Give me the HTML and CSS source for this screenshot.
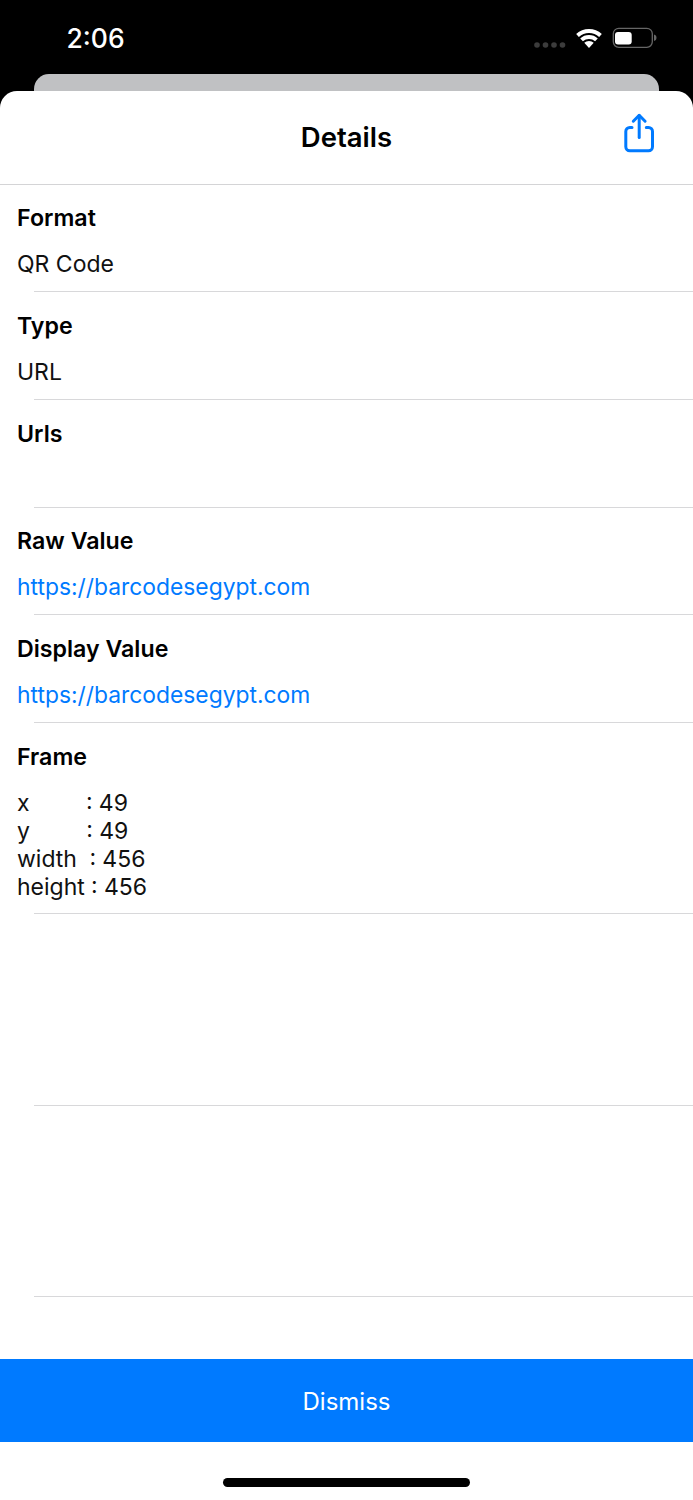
FILE: index.html
```html
<!DOCTYPE html>
<html lang="en">
<head>
<meta charset="utf-8">
<title>Details</title>
<link rel="stylesheet" href="styles.css">
</head>
<body>
<div class="status">
  <span class="time">2:06</span>
  <div class="status-icons">
    <svg class="signal" width="32" height="6" viewBox="0 0 32 6"><g fill="#3c3c3c"><circle cx="3" cy="3" r="2.8"/><circle cx="11.5" cy="3" r="2.8"/><circle cx="20" cy="3" r="2.8"/><circle cx="28.5" cy="3" r="2.8"/></g></svg>
    <svg class="wifi" width="28" height="21" viewBox="0 0 28 21"><path d="M2.520 7.470a17 17 0 0 1 22.960 0" fill="none" stroke="#fff" stroke-width="4"/><path d="M6.570 11.890a11 11 0 0 1 14.860 0" fill="none" stroke="#fff" stroke-width="4"/><path d="M9.270 14.840a7 7 0 0 1 9.460 0L14 20z" fill="#fff"/></svg>
    <svg class="battery" width="45" height="21" viewBox="0 0 45 21"><rect x="1.300" y="1.300" width="39" height="19" rx="5.500" fill="none" stroke="#666" stroke-width="1.300"/><rect x="3" y="5" width="16.700" height="12.400" rx="3" fill="#fff"/><path d="M42 7.500c1.500.4 2.500 1.500 2.500 3.300s-1 2.900-2.500 3.300z" fill="#666"/></svg>
  </div>
</div>
<div class="back-card"></div>
<main class="sheet">
  <header class="nav">
    <h1 class="nav-title">Details</h1>
    <svg class="share" width="31" height="40" viewBox="0 0 31 40" fill="none" stroke="#007aff" stroke-width="3" stroke-linecap="round" stroke-linejoin="round"><path d="M8 14.500H5.800a4 4 0 0 0-4 4v15.300a4 4 0 0 0 4 4h18.700a4 4 0 0 0 4-4V18.500a4 4 0 0 0-4-4h-2.200"/><path d="M15.200 24.500V2.500"/><path d="M9.300 8.200l5.900-5.900 5.900 5.900"/></svg>
  </header>
  <section class="list">
    <div class="row"><div class="label">Format</div><div class="value">QR Code</div></div>
    <div class="row"><div class="label">Type</div><div class="value">URL</div></div>
    <div class="row"><div class="label">Urls</div></div>
    <div class="row"><div class="label">Raw Value</div><div class="value link">https://barcodesegypt.com</div></div>
    <div class="row"><div class="label">Display Value</div><div class="value link">https://barcodesegypt.com</div></div>
    <div class="row tall"><div class="label">Frame</div><div class="value multi">x&nbsp; &nbsp; &nbsp; &nbsp; &nbsp;: 49<br>y&nbsp; &nbsp; &nbsp; &nbsp; &nbsp;: 49<br>width&nbsp; : 456<br>height : 456</div></div>
    <div class="row tall"></div>
    <div class="row tall"></div>
  </section>
  <button class="dismiss" type="button">Dismiss</button>
  <div class="home-area"><div class="home-bar"></div></div>
</main>
</body>
</html>
```
FILE: styles.css
```css
* { box-sizing: border-box; }
html, body { margin: 0; padding: 0; }
body {
  width: 693px;
  height: 1500px;
  overflow: hidden;
  background: #000;
  font-family: Inter, "Liberation Sans", sans-serif;
  color: #000;
}
.status {
  height: 74px;
  display: flex;
  justify-content: space-between;
  align-items: flex-start;
  padding: 0 36px 0 66.500px;
}
.time {
  margin-top: 21px;
  font-size: 26.500px;
  line-height: 34px;
  font-weight: 500;
  color: #fff;
}
.status-icons {
  display: flex;
  align-items: flex-start;
  margin-top: 27px;
}
.signal { margin-top: 15px; margin-right: 9px; }
.wifi { margin-top: 1px; margin-right: 9px; }
.battery { display: block; }
.back-card {
  height: 17px;
  margin: 0 34px;
  background: #c0c1c3;
  border-radius: 15px 15px 0 0;
}
.sheet {
  height: 1409px;
  background: #fff;
  border-radius: 17px 17px 0 0;
  display: flex;
  flex-direction: column;
}
.nav {
  height: 93.500px;
  flex: none;
  display: flex;
  align-items: center;
  justify-content: center;
  border-bottom: 1px solid #d4d4d6;
  position: relative;
}
.nav-title {
  margin: 0;
  font-size: 27.500px;
  font-weight: 600;
  line-height: 34px;
}
.share {
  position: absolute;
  right: 38px;
  top: 22px;
}
.list { flex: none; }
.row {
  height: 107.700px;
  padding: 19.700px 0 0 17px;
  position: relative;
}
.row::after {
  content: "";
  position: absolute;
  left: 34px;
  right: 0;
  bottom: 0;
  height: 1px;
  background: #d8d8da;
}
.row.tall { height: 191.400px; }
.label {
  font-size: 23.200px;
  line-height: 28px;
  font-weight: 600;
}
.value {
  margin-top: 18px;
  font-size: 23px;
  line-height: 28px;
  font-weight: 400;
  color: #111;
}
.value.link { color: #007aff; font-size: 22.850px; }
.value.multi { word-spacing: -0.200px; }
.dismiss {
  flex: none;
  display: block;
  width: 100%;
  height: 83.500px;
  margin-top: 61.800px;
  border: 0;
  padding: 1px 0 0;
  background: #007aff;
  color: #fff;
  font-family: inherit;
  font-size: 24px;
  font-weight: 400;
}
.home-area {
  flex: 1;
  display: flex;
  justify-content: center;
  padding-top: 36px;
}
.home-bar {
  width: 247px;
  height: 9px;
  border-radius: 5px;
  background: #000;
}
```
